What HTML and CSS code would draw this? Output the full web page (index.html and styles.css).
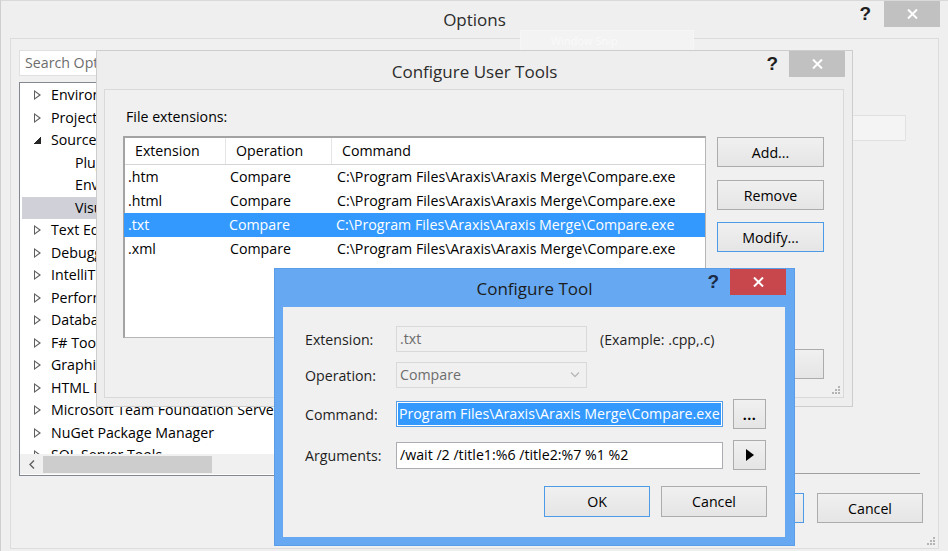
FILE: index.html
```html
<!DOCTYPE html>
<html>
<head lang="en">
  <meta charset="UTF-8">
  <title>Options</title>
  <link rel="stylesheet" href="styles.css">
</head>
<body>
<div class="options">
  <div class="win-bar options-bar">
    <span></span>
    <div class="win-title">Options</div>
    <div class="caption">
      <span class="help">?</span>
      <span class="close-btn gray"><svg width="11" height="10" viewBox="0 0 11 10"><path d="M1 0.5L10 9.5M10 0.5L1 9.5" stroke="#fff" stroke-width="2"/></svg></span>
    </div>
  </div>
  <div class="options-client">
    <div class="options-main">
      <div class="options-left">
        <div class="search">Search Options (Ctrl+E)</div>
        <div class="tree">
          <ul class="tree-list">
            <li><i class="tri"></i>Environment</li>
            <li><i class="tri"></i>Projects and Solutions</li>
            <li><i class="tri open"></i>Source Control</li>
            <li class="sub">Plug-in Selection</li>
            <li class="sub">Environment</li>
            <li class="sub selected">Visual Studio Team Foundation Server</li>
            <li><i class="tri"></i>Text Editor</li>
            <li><i class="tri"></i>Debugging</li>
            <li><i class="tri"></i>IntelliTrace</li>
            <li><i class="tri"></i>Performance Tools</li>
            <li><i class="tri"></i>Database Tools</li>
            <li><i class="tri"></i>F# Tools</li>
            <li><i class="tri"></i>Graphics Diagnostics</li>
            <li><i class="tri"></i>HTML Designer</li>
            <li><i class="tri"></i>Microsoft Team Foundation Server Power Tools</li>
            <li><i class="tri"></i>NuGet Package Manager</li>
            <li><i class="tri"></i>SQL Server Tools</li>
          </ul>
          <div class="hscroll">
            <span class="hscroll-arrow"><svg width="6" height="9" viewBox="0 0 6 9"><path d="M5 0.5L1 4.5L5 8.5" fill="none" stroke="#606060" stroke-width="1.4"/></svg></span>
            <span class="hscroll-thumb"></span>
          </div>
        </div>
      </div>
      <div class="options-right">
        <div class="text-field"></div>
        <div class="sep"></div>
      </div>
    </div>
    <div class="options-footer">
      <a class="btn default" href="javascript:void(0);">OK</a>
      <a class="btn" href="javascript:void(0);">Cancel</a>
    </div>
    <span class="grip"><svg width="8" height="8" viewBox="0 0 8 8" fill="#b4b4b4"><rect x="6" y="0" width="2" height="2"/><rect x="3" y="3" width="2" height="2"/><rect x="6" y="3" width="2" height="2"/><rect x="0" y="6" width="2" height="2"/><rect x="3" y="6" width="2" height="2"/><rect x="6" y="6" width="2" height="2"/></svg></span>
  </div>
  <div class="snip">Window Snip</div>
</div>

<div class="dlg user-tools">
  <div class="win-bar ut-bar">
    <span></span>
    <div class="win-title">Configure User Tools</div>
    <div class="caption">
      <span class="help">?</span>
      <span class="close-btn gray"><svg width="11" height="10" viewBox="0 0 11 10"><path d="M1 0.5L10 9.5M10 0.5L1 9.5" stroke="#fff" stroke-width="2"/></svg></span>
    </div>
  </div>
  <div class="ut-client">
    <div class="ut-left">
      <div class="ut-label">File extensions:</div>
      <div class="list">
        <div class="list-row list-head">
          <span class="col-ext">Extension</span>
          <span class="col-op">Operation</span>
          <span class="col-cmd">Command</span>
        </div>
        <div class="list-row">
          <span class="col-ext">.htm</span>
          <span class="col-op">Compare</span>
          <span class="col-cmd">C:\Program Files\Araxis\Araxis Merge\Compare.exe</span>
        </div>
        <div class="list-row">
          <span class="col-ext">.html</span>
          <span class="col-op">Compare</span>
          <span class="col-cmd">C:\Program Files\Araxis\Araxis Merge\Compare.exe</span>
        </div>
        <div class="list-row selected">
          <span class="col-ext">.txt</span>
          <span class="col-op">Compare</span>
          <span class="col-cmd">C:\Program Files\Araxis\Araxis Merge\Compare.exe</span>
        </div>
        <div class="list-row">
          <span class="col-ext">.xml</span>
          <span class="col-op">Compare</span>
          <span class="col-cmd">C:\Program Files\Araxis\Araxis Merge\Compare.exe</span>
        </div>
      </div>
    </div>
    <div class="ut-right">
      <a class="btn" href="javascript:void(0);">Add...</a>
      <a class="btn" href="javascript:void(0);">Remove</a>
      <a class="btn default" href="javascript:void(0);">Modify...</a>
      <a class="btn ut-ok" href="javascript:void(0);">OK</a>
    </div>
    <span class="grip"><svg width="8" height="8" viewBox="0 0 8 8" fill="#b4b4b4"><rect x="6" y="0" width="2" height="2"/><rect x="3" y="3" width="2" height="2"/><rect x="6" y="3" width="2" height="2"/><rect x="0" y="6" width="2" height="2"/><rect x="3" y="6" width="2" height="2"/><rect x="6" y="6" width="2" height="2"/></svg></span>
  </div>
</div>

<div class="dlg tool">
  <div class="win-bar tool-bar">
    <span></span>
    <div class="win-title">Configure Tool</div>
    <div class="caption">
      <span class="help navy">?</span>
      <span class="close-btn red"><svg width="11" height="10" viewBox="0 0 11 10"><path d="M1 0.5L10 9.5M10 0.5L1 9.5" stroke="#fff" stroke-width="2"/></svg></span>
    </div>
  </div>
  <div class="tool-client">
    <div class="field-row row-ext">
      <label>Extension:</label>
      <div class="input disabled short">.txt</div>
      <span class="hint">(Example: .cpp,.c)</span>
    </div>
    <div class="field-row row-op">
      <label>Operation:</label>
      <div class="input disabled short combo">Compare
        <svg width="10" height="6" viewBox="0 0 10 6"><path d="M1 0.5L5 4.5L9 0.5" fill="none" stroke="#b8b8b8" stroke-width="1.3"/></svg>
      </div>
    </div>
    <div class="field-row row-cmd">
      <label>Command:</label>
      <div class="input long focused"><span class="sel-text">Program Files\Araxis\Araxis Merge\Compare.exe</span></div>
      <a class="btn side-btn" href="javascript:void(0);">...</a>
    </div>
    <div class="field-row row-args">
      <label>Arguments:</label>
      <div class="input long">/wait /2 /title1:%6 /title2:%7 %1 %2</div>
      <a class="btn side-btn" href="javascript:void(0);"><svg width="8" height="12" viewBox="0 0 8 12"><path d="M0 0L8 6L0 12Z" fill="#000"/></svg></a>
    </div>
    <div class="tool-footer">
      <a class="btn default" href="javascript:void(0);">OK</a>
      <a class="btn" href="javascript:void(0);">Cancel</a>
    </div>
  </div>
</div>
</body>
</html>
```

FILE: styles.css
```css
* {
  box-sizing: border-box;
}

ul, li, div, span, a, label {
  padding: 0px;
  margin: 0px;
}

body {
  margin: 0px;
  font-family: "Open Sans", "Noto Sans", sans-serif;
  font-size: 14.2px;
  color: #000000;
  background: #f0f0f0;
  overflow: hidden;
}

a {
  text-decoration: none;
  color: #000000;
}

/* window chrome */
.win-bar {
  display: grid;
  grid-template-columns: 1fr auto 1fr;
}

.win-title {
  font-size: 17px;
  line-height: 24px;
  color: #2b2b2b;
}

.caption {
  display: flex;
  justify-content: flex-end;
  align-items: flex-start;
}

.help {
  font-family: "Liberation Sans", sans-serif;
  font-weight: bold;
  font-size: 19px;
  line-height: 26px;
  height: 26px;
  color: #1e1e1e;
  margin-right: 12px;
}

.help.navy {
  color: #1b2a45;
}

.close-btn {
  width: 56px;
  height: 26px;
  display: flex;
  align-items: center;
  justify-content: center;
}

.close-btn.gray {
  background: #c1c1c1;
}

.close-btn.red {
  background: #c7474d;
}

.btn {
  display: flex;
  align-items: center;
  justify-content: center;
  height: 30px;
  width: 107px;
  border: 1px solid #acacac;
  background: linear-gradient(#f0f0f0, #e5e5e5);
  color: #000000;
}

.btn.default {
  border-color: #4d9be6;
}

.grip {
  position: absolute;
  right: 3px;
  bottom: 3px;
  width: 8px;
  height: 8px;
  display: flex;
}

/* options window */
.options {
  width: 948px;
  height: 551px;
  position: relative;
  background: #efefef;
  border-left: 1px solid #cfcfcf;
  border-top: 1px solid #d9d9d9;
  overflow: hidden;
}

.options-bar {
  height: 37px;
}

.options-bar .win-title {
  padding-top: 7px;
}

.options-bar .caption {
  padding-right: 8px;
}

.options-bar .help {
  margin-right: 13px;
}

.options-client {
  position: relative;
  margin: 0px 9px 0px 9px;
  height: 511px;
  border: 1px solid #dcdcdc;
  background: #f0f0f0;
  padding: 11px 15px 0px 8px;
}

.options-main {
  display: flex;
  height: 426px;
}

.options-left {
  width: 302px;
  display: flex;
  flex-direction: column;
}

.search {
  height: 26px;
  border: 1px solid #e0e0e0;
  background: #ffffff;
  color: #6d6d6d;
  padding-left: 5px;
  line-height: 24px;
  white-space: nowrap;
  overflow: hidden;
}

.tree {
  margin-top: 6px;
  height: 394px;
  border: 1px solid #828790;
  background: #ffffff;
  display: flex;
  flex-direction: column;
}

.tree-list {
  list-style: none;
  flex: 1;
  overflow: hidden;
  padding-top: 1px;
}

.tree-list li {
  height: 22.5px;
  line-height: 22.5px;
  padding-left: 31px;
  white-space: nowrap;
  display: flex;
  align-items: center;
}

.tree-list li.sub {
  padding-left: 55px;
}

.tree-list li.selected {
  background: #cfd0d8;
  margin-left: 2px;
  padding-left: 53px;
}

.tri {
  width: 0px;
  height: 0px;
  margin-left: -17px;
  margin-right: 10px;
  border-top: 5px solid transparent;
  border-bottom: 5px solid transparent;
  border-left: 7px solid #5f5f5f;
  position: relative;
}

.tri::after {
  content: "";
  position: absolute;
  left: -6px;
  top: -3.2px;
  border-top: 3.2px solid transparent;
  border-bottom: 3.2px solid transparent;
  border-left: 4.4px solid #ffffff;
}

.tri.open {
  border: none;
  width: 7px;
  height: 7px;
  background: linear-gradient(135deg, transparent 50%, #262626 50%);
}

.tri.open::after {
  display: none;
}

.hscroll {
  height: 20px;
  margin-bottom: 1px;
  background: #f0f0f0;
  display: flex;
  align-items: center;
}

.hscroll-arrow {
  width: 23px;
  display: flex;
  justify-content: center;
}

.hscroll-thumb {
  width: 169px;
  height: 17px;
  background: #cdcdcd;
}

.options-right {
  flex: 1;
  margin-left: 9px;
  margin-right: 3px;
  display: flex;
  flex-direction: column;
}

.text-field {
  margin-top: 65px;
  margin-right: 14px;
  height: 26px;
  border: 1px solid #e1e1e1;
  background: #f4f4f4;
}

.sep {
  margin-top: auto;
  margin-bottom: 2px;
  height: 1px;
  background: #a0a0a0;
}

.options-footer {
  display: flex;
  justify-content: flex-end;
  gap: 13px;
  margin-top: 17px;
}

.options-footer .btn {
  width: 106px;
  height: 30px;
}

.snip {
  position: absolute;
  left: 519px;
  top: 29px;
  width: 174px;
  height: 22px;
  border: 1px solid #f6f6f6;
  background: #f3f3f3;
  color: #fafafa;
  font-size: 11px;
  line-height: 20px;
  padding-left: 30px;
}

/* dialogs */
.dlg {
  position: absolute;
}

.user-tools {
  left: 96px;
  top: 50px;
  width: 757px;
  height: 357px;
  border: 1px solid #cdcdcd;
  background: #eeeeee;
}

.ut-bar {
  height: 38px;
}

.ut-bar .win-title {
  padding-top: 9px;
}

.ut-bar .caption {
  padding-right: 7px;
}

.ut-bar .help {
  margin-right: 11px;
  line-height: 26px;
}

.ut-client {
  position: relative;
  margin: 0px 8px 0px 7px;
  height: 309px;
  border: 1px solid #d9d9d9;
  background: #f0f0f0;
  padding: 17px 18px 18px 18px;
  display: grid;
  grid-template-columns: 583px 107px;
  column-gap: 11px;
}

.ut-label {
  line-height: 20px;
  height: 20px;
  padding-left: 3px;
}

.list {
  margin-top: 9px;
  height: 202px;
  background: #ffffff;
  border: 1px solid #b5b5b5;
  border-top: 2px solid #a3a3a3;
  border-left: 2px solid #a3a3a3;
}

.list-row {
  display: flex;
  height: 24px;
  line-height: 24px;
  white-space: nowrap;
}

.list-row span {
  padding-left: 3px;
}

.list-row .col-ext {
  width: 101px;
}

.list-row .col-op {
  width: 106px;
  padding-left: 4px;
}

.list-row .col-cmd {
  padding-left: 5px;
}

.list-row.list-head {
  height: 27px;
  line-height: 26px;
  border-bottom: 1px solid #d5d5d5;
}

.list-head span {
  padding-left: 10px !important;
  border-right: 1px solid #e5e5e5;
}

.list-head .col-cmd {
  flex: 1;
  border-right: none;
}

.list-row.selected {
  background: #3399ff;
  color: #ffffff;
  margin-left: -1px;
}

.list-row.selected .col-ext {
  padding-left: 4px;
}

.ut-right {
  display: flex;
  flex-direction: column;
  padding-top: 30px;
}

.ut-right .btn {
  margin-bottom: 13px;
}

.ut-right .btn.default {
  margin-top: -1px;
}

.ut-right .btn.ut-ok {
  margin-top: auto;
  margin-bottom: 0px;
}

.tool {
  left: 274px;
  top: 268px;
  width: 521px;
  height: 278px;
  border: 1px solid #5c9de8;
  background: #66a8f2;
}

.tool-bar {
  height: 38px;
}

.tool-bar .win-title {
  padding-top: 8px;
  color: #1c1c1c;
}

.tool-bar .caption {
  padding-right: 8px;
}

.tool-bar .help {
  margin-right: 11px;
}

.tool-client {
  margin: 0px 9px 0px 8px;
  height: 230px;
  background: #f0f0f0;
  padding: 19px 18px 0px 22px;
}

.field-row {
  display: flex;
  align-items: center;
  height: 26px;
}

.field-row label {
  width: 91px;
  color: #1e1e1e;
}

.row-ext {
  margin-bottom: 10px;
}

.row-op {
  margin-bottom: 11px;
}

.row-cmd, .row-args {
  height: 30px;
  margin-bottom: 11px;
}

.row-args {
  margin-bottom: 16px;
}

.input {
  height: 26px;
  border: 1px solid #abadb3;
  background: #ffffff;
  line-height: 24px;
  padding-left: 3px;
  white-space: nowrap;
  overflow: hidden;
}

.input.short {
  width: 191px;
}

.input.long {
  width: 327px;
}

.row-args .input {
  height: 27px;
}

.input.disabled {
  background: #f0f0f0;
  border-color: #d9d9d9;
  color: #6d6d6d;
}

.input.combo {
  display: flex;
  justify-content: space-between;
  align-items: center;
  padding-right: 6px;
}

.input.focused {
  border-color: #569de5;
  padding: 1px;
}

.sel-text {
  display: block;
  height: 22px;
  line-height: 22px;
  padding-left: 1px;
  background: #3399ff;
  color: #ffffff;
  min-width: 100%;
}

.hint {
  margin-left: 13px;
  color: #1e1e1e;
}

.side-btn {
  width: 33px;
  margin-left: 10px;
  font-weight: bold;
  letter-spacing: 0.5px;
}

.tool-footer {
  display: flex;
  justify-content: flex-end;
  gap: 11px;
}

.tool-footer .btn {
  width: 106px;
  height: 31px;
}
```
